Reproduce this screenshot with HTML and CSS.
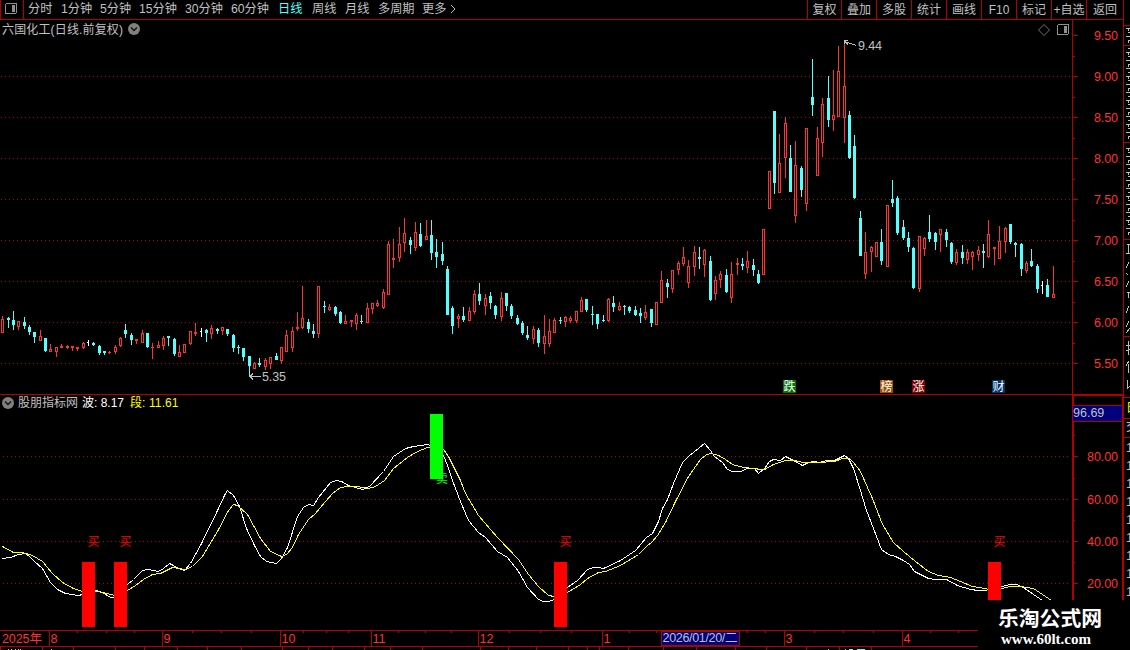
FILE: index.html
```html
<!DOCTYPE html>
<html lang="zh-CN">
<head>
  <meta charset="UTF-8">
  <title>六国化工 日线</title>
  <link rel="stylesheet" href="styles.css">
</head>
<body>

<div class="left">
  <header class="toolbar">
    <div class="toggle">
      <svg width="12" height="11"><rect x="0.5" y="0.5" width="11" height="10" rx="1.5" fill="none" stroke="#909090"/><rect x="7" y="2" width="3" height="7" fill="#909090"/></svg>
    </div>
    <nav class="periods">
      <a>分时</a><a>1分钟</a><a>5分钟</a><a>15分钟</a><a>30分钟</a><a>60分钟</a><a class="active">日线</a><a>周线</a><a>月线</a><a>多周期</a><a>更多</a>
      <svg width="6" height="10"><path d="M1 1L5 5L1 9" fill="none" stroke="#c0c0c0"/></svg>
    </nav>
    <nav class="tools">
      <a>复权</a><a>叠加</a><a>多股</a><a>统计</a><a>画线</a><a>F10</a><a>标记</a><a>+自选</a><a class="back">返回</a>
    </nav>
  </header>

  <section class="panel main">
    <div class="plot">
      <div class="title">
        <span class="stock">六国化工(日线.前复权)</span>
        <svg class="drop" width="12" height="12"><circle cx="6" cy="6" r="6" fill="#808080"/><path d="M3 4.5L6 7.5L9 4.5" fill="none" stroke="#111" stroke-width="1.4"/></svg>
        <div class="corner">
          <svg width="12" height="12"><path d="M6 0.5L11.5 6L6 11.5L0.5 6Z" fill="none" stroke="#707070"/></svg>
          <svg width="12" height="11"><rect x="0.5" y="0.5" width="11" height="10" rx="1.5" fill="none" stroke="#909090"/><rect x="7" y="2" width="3" height="7" fill="#909090"/></svg>
        </div>
      </div>
      <svg id="kline" width="1072" height="356" viewBox="0 38 1072 356"></svg>
    </div>
    <svg id="axis1" width="51" height="374" viewBox="1072 20 51 374"></svg>
  </section>

  <section class="panel sub">
    <div class="plot">
      <div class="title">
        <svg class="drop" width="12" height="12"><circle cx="6" cy="6" r="6" fill="#808080"/><path d="M3 4.5L6 7.5L9 4.5" fill="none" stroke="#111" stroke-width="1.4"/></svg>
        <span class="name">股朋指标网</span>
        <span class="bo">波: 8.17</span>
        <span class="duan">段: 11.61</span>
      </div>
      <svg id="wave" width="1072" height="219" viewBox="0 411 1072 219"></svg>
    </div>
    <div class="axis2">
      <div class="current">96.69</div>
      <svg id="axis2" width="49" height="208" viewBox="1074 422 49 208"></svg>
    </div>
  </section>

  <footer>
    <svg id="dates" width="1123" height="20" viewBox="0 630 1123 20"></svg>
  </footer>
</div>

<aside class="side">
  <svg id="side" width="6" height="397" viewBox="1124 0 6 397"></svg>
  <div class="tab">日</div>
  <div class="row">交</div>
  <div class="nums"><i>1</i><i>1</i><i>1</i><i>1</i><i>1</i><i>1</i><i>1</i><i>1</i><i>1</i></div>
</aside>

<div class="watermark">
  <b>乐淘公式网</b>
  <span>www.60lt.com</span>
</div>

<script src="script.js"></script>
</body>
</html>
```
FILE: styles.css
```css
* {
  box-sizing: border-box;
  margin: 0;
  padding: 0;
}
body {
  width: 1130px;
  height: 650px;
  overflow: hidden;
  background: #000;
  color: #c0c0c0;
  display: flex;
  position: relative;
  font-family: "Liberation Sans", "Noto Sans CJK SC", sans-serif;
  font-size: 12px;
}
svg {
  display: block;
  flex: none;
}
.left {
  width: 1123px;
  flex: none;
}
.toolbar {
  height: 20px;
  border-bottom: 1px solid #b00000;
  display: flex;
}
.toggle {
  width: 24px;
  border: 1px solid #b00000;
  border-width: 0 1px;
  padding: 3px 0 0 4px;
}
.periods {
  display: grid;
  grid-template-columns: 33px 39px 39px 46px 46px 47px 34px 33px 33px 44px 28px 10px;
  padding-left: 4px;
  line-height: 19px;
  white-space: nowrap;
  font-size: 12.2px;
}
.periods svg {
  margin-top: 4px;
}
.active {
  color: #54ffff;
}
.tools {
  margin-left: auto;
  display: flex;
  line-height: 20px;
  text-align: center;
  white-space: nowrap;
}
.tools a {
  width: 35px;
  height: 19px;
  border-left: 1px solid #b00000;
}
.tools a:first-child {
  width: 34px;
}
.tools a.back {
  width: 37px;
}
.panel {
  display: flex;
}
.main {
  height: 375px;
  border-bottom: 1px solid #b00000;
}
.plot {
  width: 1072px;
}
.title {
  display: flex;
  height: 18px;
  line-height: 20px;
  white-space: nowrap;
}
.stock {
  width: 125px;
  padding-left: 2px;
  letter-spacing: 0.15px;
}
.drop {
  margin: 3px 0 0 3px;
}
.corner {
  display: flex;
  gap: 7px;
  margin-left: auto;
  padding: 4px 3px 0 0;
}
.sub {
  height: 235px;
}
.sub .title {
  height: 16px;
  line-height: 17px;
}
.sub .drop {
  margin: 2px 0 0 2px;
}
.name {
  width: 68px;
  padding-left: 4px;
}
.bo {
  width: 48px;
  color: #fff;
}
.duan {
  color: #ff0;
  letter-spacing: 0.1px;
}
.axis2 {
  width: 51px;
  border: solid #b00000;
  border-width: 1px 1px 0 2px;
}
.current {
  height: 17px;
  margin-top: 9px;
  border: solid #b00000;
  border-width: 1px 0;
  background: #00007f;
  line-height: 15px;
  font-size: 12.5px;
  margin-left: -1px;
}
.side {
  width: 7px;
  flex: none;
  border-left: 1px solid #b00000;
  overflow: hidden;
}
.tab, .row {
  height: 21px;
  border-top: 1px solid #b00000;
  padding-left: 2px;
  line-height: 20px;
  color: #ff0;
}
.row {
  color: #c0c0c0;
  height: 19px;
  line-height: 17px;
}
.nums {
  border-top: 1px solid #b00000;
  padding-left: 2px;
}
.nums i {
  display: block;
  height: 18px;
  line-height: 20px;
  font-style: normal;
  font-size: 13px;
}
.watermark {
  position: absolute;
  left: 978px;
  top: 600px;
  width: 152px;
  height: 50px;
  background: #000;
  color: #fff;
  padding: 7px 0 0 20px;
}
.watermark b {
  display: block;
  font-size: 20.8px;
  line-height: 24px;
  white-space: nowrap;
}
.watermark span {
  display: block;
  padding-left: 3px;
  font: bold 15px/16px "Liberation Serif", serif;
}

/* chart parts */
.line { fill: none; stroke: #b00000; shape-rendering: crispEdges; }
.grid { stroke: #b00000; stroke-dasharray: 1 3; shape-rendering: crispEdges; }
.up { fill: #ff3232; }
.down { fill: #54ffff; }
.flat { fill: #fff; }
.hole { fill: #000; }
.white, .yellow { fill: none; stroke: #fff; shape-rendering: crispEdges; }
.yellow { stroke: #ff0; }
.label { fill: #ff3232; font-size: 12.5px; }
.note { fill: #c0c0c0; font-size: 12.5px; }
.arrow { fill: none; stroke: #c0c0c0; shape-rendering: crispEdges; }
.badge { fill: #fff; font-size: 12px; }
.buy { fill: #f00; font-size: 12px; }
.sell { fill: #0f0; font-size: 12px; }
rect { shape-rendering: crispEdges; }
```
FILE: script.js
```js
// one row per day: high, body top, body bottom, low, direction (u / d / w)
const days = `
316 319 333 333 u|317 318 320 328 d|311 320 325 330 d|321 321 327 330 u|317 322 326 329 d|325 327 332 335 d|332 332 337 343 d|330 336 341 341 u
338 338 351 352 d|344 349 352 352 u|347 347 352 357 u|344 346 348 348 u|345 346 348 349 u|346 346 348 351 u|347 347 349 351 u|342 343 348 349 u
340 342 343 346 w|342 343 345 346 d|345 346 353 355 d|351 351 353 355 d|351 352 353 354 u|345 347 352 354 u|337 338 346 347 u|324 330 334 338 d
333 335 340 345 d|339 339 341 344 u|330 333 343 343 u|333 333 347 348 d|343 347 348 359 u|341 345 348 348 u|336 338 346 350 u|336 336 338 346 d
338 339 354 356 d|345 352 357 357 u|344 344 353 353 u|331 331 344 345 u|323 332 334 336 u|328 331 332 337 w|329 330 333 342 d|325 328 334 339 u
328 329 331 334 d|327 327 331 335 u|329 329 334 336 d|334 335 348 352 d|345 347 348 354 d|348 348 357 361 d|356 356 366 376 d|362 363 369 369 u
358 363 365 367 d|358 360 367 370 u|357 357 364 369 u|353 356 360 360 d|347 347 361 364 u|330 335 352 352 u|327 331 348 352 u|312 327 329 331 u
286 318 328 329 u|319 322 329 333 d|324 331 334 338 d|286 286 334 338 u|301 306 307 313 d|304 307 310 311 u|306 307 314 316 d|311 312 323 324 d
315 321 324 324 u|320 320 322 327 u|313 315 324 330 u|315 321 322 324 d|303 308 323 323 u|303 303 309 314 u|300 303 306 307 u|289 292 308 309 u
241 244 295 295 u|239 258 260 268 u|227 244 258 262 u|218 233 243 252 u|237 240 245 254 d|222 232 248 251 u|223 234 246 247 d|220 236 240 240 u
220 235 253 260 d|239 252 257 268 d|242 254 261 265 d|266 269 315 315 d|306 308 326 334 d|314 316 319 328 u|307 316 320 322 d|307 311 321 321 u
290 294 312 314 u|283 294 301 305 d|294 298 306 315 u|292 296 303 309 d|305 306 315 319 d|292 298 317 321 u|293 293 306 311 d|304 306 316 319 d
315 318 324 325 d|321 323 333 335 d|326 335 338 340 d|326 329 339 344 u|328 330 343 347 d|315 336 344 354 u|319 331 344 347 u|318 320 333 333 u
317 320 321 324 d|316 317 322 327 u|316 318 321 323 u|311 311 321 323 u|297 300 312 312 u|299 299 310 312 d|306 314 315 325 d|314 314 324 329 d
315 320 321 322 d|298 299 321 322 u|296 303 307 312 d|302 306 310 311 u|305 306 307 315 d|306 307 311 313 d|306 310 315 316 d|308 313 316 323 d
305 312 318 320 u|309 309 323 327 d|302 302 325 325 u|271 280 303 303 u|279 283 287 298 d|270 270 289 293 u|261 263 270 275 u|247 257 264 266 u
260 266 283 288 u|246 252 267 276 u|247 257 259 269 d|249 250 265 277 u|256 261 300 301 d|276 280 294 300 u|271 274 280 288 u|269 275 292 293 d
262 274 298 303 u|258 263 265 275 u|258 264 266 270 d|251 261 268 273 u|259 265 270 276 d|270 274 283 284 d|229 229 275 275 u|171 171 209 209 u
111 111 183 194 d|134 163 193 193 u|117 123 158 178 u|145 158 192 192 d|141 165 216 223 u|166 168 190 197 d|128 128 204 211 u|59 97 105 116 d
127 138 176 176 u|98 104 143 157 u|76 98 120 127 d|70 115 120 131 u|46 71 117 117 u|43 86 118 143 u|111 115 158 159 d|135 146 198 199 d
211 218 256 256 d|232 252 274 279 u|246 247 252 272 u|242 242 257 257 u|229 242 261 265 d|205 205 267 267 u|180 199 203 207 d|196 198 233 235 d
220 227 238 240 d|232 238 247 252 d|247 248 288 289 d|236 236 289 292 u|237 238 249 256 u|215 232 239 242 d|232 233 242 250 d|229 229 235 252 u
229 232 240 247 d|242 243 262 264 d|249 252 263 265 u|245 252 258 264 d|249 252 260 264 u|251 252 257 270 u|246 250 255 261 u|244 251 253 268 d
220 234 257 258 u|247 247 249 265 u|226 241 259 259 u|227 228 242 253 u|224 224 242 244 d|242 243 245 257 d|243 244 269 276 d|261 263 271 273 u
249 261 266 267 d|264 266 289 293 d|281 285 286 294 w|279 285 297 297 d|266 294 298 298 u`.trim().split(/[|\n]/);

const bo = '2,558 10,557 18,554 25,553 29,556 34,561 42,568 50,582 57,589 65,593 78,595 82,594 89,591 96,590 102,592 110,597 114,597 120,590 127,584 133,579 142,570 148,569 158,571 163,568 169,563 173,565 178,568 184,570 190,563 201,543 218,508 224,495 227,490 233,495 239,506 246,528 254,545 260,556 266,561 276,563 281,558 287,547 297,516 303,507 308,504 313,505 318,497 330,482 336,480 341,481 348,485 362,489 369,486 383,471 393,456 405,448 413,446 427,444 430,445 443,455 447,465 452,480 460,501 468,520 478,532 485,537 497,551 507,557 518,571 527,587 538,599 543,601 548,601 554,599 567,587 577,580 587,569 593,567 598,567 603,568 620,560 635,550 646,537 652,533 658,521 662,508 667,499 673,483 682,462 688,456 704,443 710,450 714,456 722,462 727,469 732,471 740,471 747,468 754,468 758,473 764,468 769,461 773,459 780,460 785,456 795,461 802,465 808,462 814,461 818,462 827,460 834,460 840,457 844,455 848,458 853,468 860,490 866,510 873,528 881,549 888,554 895,556 903,560 909,564 914,571 928,578 935,579 946,579 957,585 970,589 978,590 985,590 988,589 1001,586 1010,584 1016,584 1023,587 1033,594 1042,600';
const duan = '2,546 13,552 22,552 32,555 42,561 52,573 62,582 73,588 82,591 96,591 103,592 114,595 127,590 135,585 143,579 152,574 160,573 172,567 185,569 192,566 202,556 217,531 228,510 233,504 237,505 247,514 260,538 270,551 281,556 286,554 292,547 298,534 308,519 314,514 325,501 332,493 340,487 347,486 357,486 368,488 375,486 384,480 393,468 407,457 417,451 427,447 430,447 443,449 448,456 460,480 465,493 478,515 490,529 497,537 518,559 528,574 538,586 548,595 554,596 567,592 580,584 587,578 598,572 605,571 620,565 638,554 646,546 652,541 657,535 665,522 675,501 688,476 700,459 706,454 711,453 718,455 725,459 732,464 743,467 754,468 760,469 764,469 773,464 785,460 795,460 802,462 818,462 834,461 842,458 849,458 853,462 860,471 867,487 872,498 882,524 893,542 903,551 915,561 928,571 938,575 950,577 960,581 972,586 985,588 988,589 1001,588 1010,586 1020,586 1033,588 1042,594 1051,600';

const rect = (x, y, w, h, c) => `<rect x="${x}" y="${y}" width="${w}" height="${h}" ${c[0] === '#' ? 'fill' : 'class'}="${c}"/>`;
const text = (x, y, s, c, len) => `<text x="${x}" y="${y}" class="${c}"${len ? ` textLength="${len}"` : ''}>${s}</text>`;
const path = (d, c) => `<path d="${d}" class="${c}"/>`;
const put = (id, html) => { document.getElementById(id).innerHTML = html; };
const red = '#b00000';

// candles
let k = '';
for (let y = 76; y < 394; y += 41) k += path(`M1 ${y + 0.5}H1071`, 'grid');
days.forEach((row, i) => {
  const [high, top, bottom, low, dir] = row.split(' ');
  const x = Math.floor((i + 0.5) * 5.3601);
  const cls = { u: 'up', d: 'down', w: 'flat' }[dir];
  k += rect(x, high, 1, low - high, cls);
  if (dir === 'w') {
    k += rect(x - 1, top, 1, 1, cls);
  } else {
    k += rect(x - 1, top, 3, bottom - top, cls);
  }
  if (dir === 'u' && bottom - top > 2) k += rect(x, +top + 1, 1, bottom - top - 2, 'hole');
});
k += path('M856 45.5L845 41.5M844.5 44V40.5H848M845 41.5L848 44.5', 'arrow') + text(858, 50, '9.44', 'note', 24);
k += path('M249 376.5H261M253 373.5L250 376.5L253 379.5', 'arrow') + text(262, 381, '5.35', 'note', 24);
[[783, '跌', '#007800'], [880, '榜', '#a05000'], [912, '涨', '#800000'], [992, '财', '#003468']].forEach(([x, s, c]) => {
  k += rect(x, 380, 13, 13, c) + text(x + 0.5, 391, s, 'badge');
});
put('kline', k);

// price axis
let a = rect(1072, 20, 1, 374, red);
for (let i = 0; i < 9; i++) {
  const y = 35 + i * 41;
  a += rect(1073, y, 5, 1, red) + (i < 8 ? rect(1073, y + 21, 2, 1, red) : '');
  a += text(1094, y + 5, (9.5 - i * 0.5).toFixed(2), 'label', 24);
}
put('axis1', a);

// indicator
let w = '';
[456, 499, 541, 583].forEach(y => { w += path(`M3 ${y + 0.5}H1071`, 'grid'); });
w += `<g transform="translate(0.5 0.5)"><polyline class="white" points="${bo}"/><polyline class="yellow" points="${duan}"/></g>`;
[82, 114, 554, 988].forEach(x => { w += rect(x, 562, 13, 65, '#ff0000') + text(x + 5.5, 546, '买', 'buy'); });
w += rect(430, 414, 13, 65, '#00ff00') + text(436, 483, '卖', 'sell');
put('wave', w);

let b = '';
[[456, '80.00'], [499, '60.00'], [541, '40.00'], [583, '20.00']].forEach(([y, s]) => {
  b += rect(1074, y, 4, 1, red) + text(1087, y + 5, s, 'label', 31);
});
[435, 478, 520, 562].forEach(y => { b += rect(1074, y, 1, 1, red); });
put('axis2', b);

// date axis
let d = rect(0, 630, 978, 1, red) + rect(0, 646, 978, 1, red) + text(2, 643, '2025年', 'label', 40);
[[49, 8], [162, 9], [280, 10], [371, 11], [478, 12], [602, 1], [784, 3], [902, 4]].forEach(([x, m]) => {
  d += rect(x, 630, 1, 16, red) + text(x + 1.5, 643, m, 'label');
});
[77, 106, 134, 192, 221, 251, 303, 326, 348, 398, 425, 451, 509, 540, 571, 629, 656, 747, 765, 814, 843, 873, 930, 958].forEach(x => { d += rect(x, 631, 1, 2, red); });
[0, 42, 73, 115, 144, 177, 207, 241, 282, 308, 332, 364, 390, 422, 480, 508, 536, 568, 587, 599, 628, 663, 696, 735, 766, 806, 839, 871].forEach(x => { d += rect(x, 647, 1, 3, red); });
d += rect(661, 630, 79, 17, red) + rect(662, 632, 77, 13, '#00007f') + text(662.5, 642, '2026/01/20/二', 'note', 75);
[8, 11, 15, 18, 20, 51, 828, 845].forEach(x => { d += rect(x, 649, 1, 1, '#c0c0c0'); });
d += rect(849, 649, 4, 1, 'down') + rect(857, 649, 8, 1, 'down');
put('dates', d);

// left edge of the order book
let s = '';
[25, 45, 142, 239, 336].forEach(y => { s += rect(1124, y, 6, 1, red); });
for (let y = 28, i = 0; y < 236; y += 4, i++) {
  if (Math.abs(y - 45) < 3 || Math.abs(y - 142) < 3) continue;
  s += path(`M${1126 + i % 2 * 2} ${y + 0.5}H1130` + (i % 3 ? '' : `M1128.5 ${y}v3`), 'arrow');
}
s += path('M1127 244.5H1130M1128.5 244V253M1126 253.5H1130M1129 262L1126 268M1126 273L1128 275M1129 281L1126 287M1127 292H1130M1128.5 292V298M1129 306L1126 313M1129 321L1126 327M1126 333L1130 328M1126 345.5H1130M1128.5 341V355M1126 351L1130 349M1129 361L1126 366M1128.5 364V373M1127.5 380V388L1130 386', 'arrow');
put('side', s);
```
